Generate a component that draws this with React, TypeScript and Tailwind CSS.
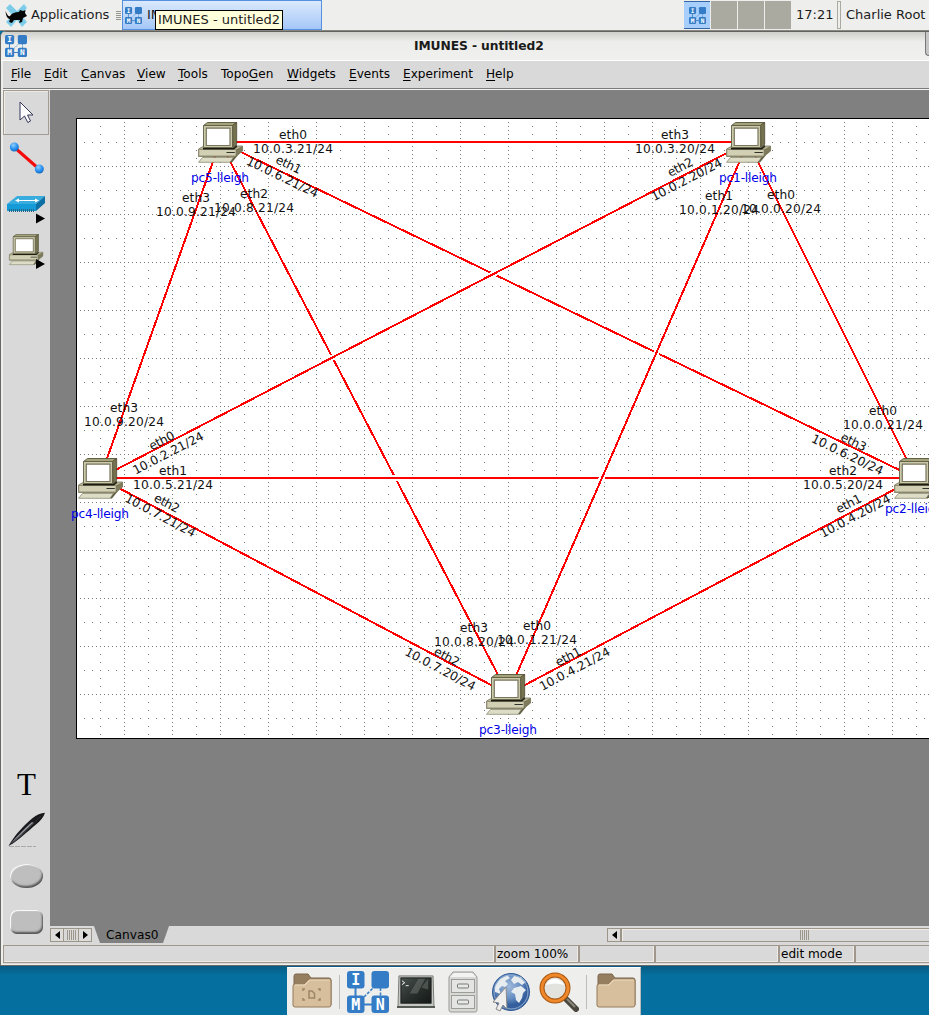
import React from "react";

type Pt = [number, number];

const nodes: Record<string, { at: Pt; label: Pt }> = {
  pc5: { at: [220, 142], label: [220, 178] },
  pc1: { at: [748, 142], label: [748, 178] },
  pc4: { at: [100, 478], label: [100, 514] },
  pc2: { at: [916, 478], label: [914, 509] },
  pc3: { at: [508, 694], label: [508, 730] },
};

// Later entries are painted above earlier ones.
const links: [string, string][] = [
  ["pc4", "pc5"],
  ["pc3", "pc5"],
  ["pc3", "pc4"],
  ["pc2", "pc5"],
  ["pc2", "pc4"],
  ["pc2", "pc3"],
  ["pc1", "pc5"],
  ["pc1", "pc4"],
  ["pc1", "pc3"],
  ["pc1", "pc2"],
];

const ifaces: [number, number, number, string, string][] = [
  [293, 142, 0, "eth0", "10.0.3.21/24"],
  [285.5, 171, 25.8, "eth1", "10.0.6.21/24"],
  [254, 201, 0, "eth2", "10.0.8.21/24"],
  [196, 205, 0, "eth3", "10.0.9.21/24"],
  [781, 202, 0, "eth0", "10.0.0.20/24"],
  [719, 203, 0, "eth1", "10.0.1.20/24"],
  [683.5, 173.5, -27.4, "eth2", "10.0.2.20/24"],
  [675, 142, 0, "eth3", "10.0.3.20/24"],
  [165, 447, -27.4, "eth0", "10.0.2.21/24"],
  [173, 478, 0, "eth1", "10.0.5.21/24"],
  [163.5, 509.5, 27.9, "eth2", "10.0.7.21/24"],
  [124, 415, 0, "eth3", "10.0.9.20/24"],
  [883, 418, 0, "eth0", "10.0.0.21/24"],
  [852, 510, -27.9, "eth1", "10.0.4.20/24"],
  [843, 478, 0, "eth2", "10.0.5.20/24"],
  [850.5, 448.5, 25.8, "eth3", "10.0.6.20/24"],
  [537, 633, 0, "eth0", "10.0.1.21/24"],
  [571.5, 663, -27.9, "eth1", "10.0.4.21/24"],
  [443.5, 663, 27.9, "eth2", "10.0.7.20/24"],
  [474, 635, 0, "eth3", "10.0.8.20/24"],
];

function PcShape() {
  return (
    <g>
      <path d="M0.5 27L6 24H44.5V29L38 34.500H0.500Z" fill="#b9b795" stroke="#77755a" strokeWidth=".8" />
      <path d="M.8 27.500H38V34H.8Z" fill="#d2d0b4" stroke="#85836a" strokeWidth=".8" />
      <path d="M38 27.500L44.700 24V29L38 34.300Z" fill="#7d7b5b" />
      <path d="M5 26H35.500L39 23V25L36 27.500H5Z" fill="#1c1c12" />
      <path d="M5.500 3.500L9.500 .5H38.700L34.500 3.500Z" fill="#a5a37c" stroke="#55533a" strokeWidth=".9" />
      <path d="M34.500 3.500L38.700 .5V22.500L35 26Z" fill="#74724f" stroke="#4c4a31" strokeWidth=".8" />
      <path d="M5.500 3.500H34.500V25.500H5.500Z" fill="#cbc9ab" stroke="#5f5d42" strokeWidth=".9" />
      <path d="M8.300 6.200H32V23.500H8.300Z" fill="#fff" stroke="#78765c" strokeWidth="1.200" />
      <path d="M28.500 30.500H36.800" stroke="#33322a" strokeWidth="1" />
      <path d="M4.500 35.500H35.500L32 40.300H.5Z" fill="#dddcc6" stroke="#8b896f" strokeWidth=".8" />
      <path d="M35.500 35.500L40 33L34 40.500H32Z" fill="#605e43" />
    </g>
  );
}

function Topology() {
  const cols = Array.from({ length: 36 }, (_, i) => 100 + i * 24).filter((x) => x < 929);
  const rows = Array.from({ length: 25 }, (_, i) => 142 + i * 24);
  return (
    <svg className="block h-[836px] w-[879px]" viewBox="50 90 879 836">
      <rect x="76" y="118" width="900" height="621" fill="#000" />
      <rect x="77" y="119" width="900" height="619" fill="#fff" />
      <g stroke="#7a7a7a" shapeRendering="crispEdges">
        {cols.map((x, i) => (
          <line key={x} x1={x + 0.5} x2={x + 0.5} y1="118" y2="738" strokeDasharray={i % 2 ? "1 3" : "1 7"} />
        ))}
        {rows.map((y, i) => (
          <line key={y} x1="76" x2="929" y1={y + 0.5} y2={y + 0.5} strokeDasharray={i % 2 ? "1 3" : "1 7"} />
        ))}
      </g>
      <path d="M76.500 739V118.500H929M76 738.500H929" fill="none" stroke="#000" shapeRendering="crispEdges" />
      {links.map(([a, b]) => {
        const [x1, y1] = nodes[a].at;
        const [x2, y2] = nodes[b].at;
        return (
          <g key={a + b} shapeRendering="crispEdges">
            <line x1={x1} y1={y1} x2={x2} y2={y2} stroke="#fff" strokeWidth="6" />
            <line x1={x1} y1={y1} x2={x2} y2={y2} stroke="#f00" strokeWidth="2" />
          </g>
        );
      })}
      <g fontFamily="'DejaVu Sans', sans-serif" fontSize="12.2" textAnchor="middle" fill="#111">
        {ifaces.map(([x, y, r, name, ip]) => (
          <g key={name + ip} transform={`translate(${x} ${y}) rotate(${r})`}>
            <text y="-3" textLength={r ? 27 : 28}>{name}</text>
            <text y="11" textLength={r ? 78 : 80}>{ip}</text>
          </g>
        ))}
      </g>
      {Object.entries(nodes).map(([id, n]) => (
        <g key={id}>
          <text x={n.label[0]} y={n.label[1] + 4} fontFamily="'DejaVu Sans', sans-serif" fontSize="12.2" textAnchor="middle" textLength="58" fill="#0000e8">
            {id}-lleigh
          </text>
          <g transform={`translate(${n.at[0] - 22} ${n.at[1] - 20})`}>
            <PcShape />
          </g>
        </g>
      ))}
    </svg>
  );
}

function ImunesLogo({ className }: { className: string }) {
  return (
    <svg className={className} viewBox="0 0 42 42">
      <path d="M8.500 16V26M17 33.500H25" stroke="#3a80c4" strokeWidth="2" />
      <path d="M33.500 17V26M17 26L26 17" stroke="#3a80c4" strokeWidth="1.600" strokeDasharray="3 1.500" />
      <g fill="#347dc6">
        <rect x="0" y="0" width="17.500" height="17.500" rx="3" />
        <rect x="24.500" y="0" width="17.500" height="17.500" rx="3" />
        <rect x="0" y="24.500" width="17.500" height="17.500" rx="3" />
        <rect x="24.500" y="24.500" width="17.500" height="17.500" rx="3" />
      </g>
      <g fill="#fff" fontFamily="'DejaVu Sans Mono', monospace" fontWeight="bold" fontSize="15" textAnchor="middle">
        <text x="8.700" y="14.300">I</text>
        <text x="8.700" y="39">M</text>
        <text x="33.300" y="39">N</text>
      </g>
    </svg>
  );
}

function MouseLogo() {
  return (
    <svg className="mr-[2px] h-[23px] w-[24px] shrink-0" viewBox="0 0 24 23">
      <path d="M1 4L5 0L12 7L19 0L22 4L16 11L22 18L17 23L12 16L6 23L1 18L7 11Z" fill="#7ccbe8" stroke="#b7e2f0" strokeWidth=".8" />
      <path d="M.5 7C1 13 3 15 5 15L4 18L7 19L9 16H15L14 19L17 18L18 14L22 12L20 9L20.500 6L18 7L15 6L14 8C10 8 7 9 5 12C3 13 2 10 .5 7Z" fill="#050505" />
    </svg>
  );
}

function Grip() {
  return (
    <div className="flex w-[5px] shrink-0 flex-col gap-px">
      {[0, 1, 2, 3, 4].map((i) => (
        <i key={i} className="h-px w-full bg-[#96968f]" />
      ))}
    </div>
  );
}

function TopPanel() {
  return (
    <div className="flex h-[31px] shrink-0 items-center border-b border-[#888880] bg-[#eeeeec] text-[13px] text-[#1c1c1c]">
      <div className="flex w-[116px] shrink-0 items-center pl-[5px]">
        <MouseLogo />
        <span className="tracking-[-0.1px]">Applications</span>
      </div>
      <Grip />
      <div className="relative ml-px flex h-[30px] w-[200px] shrink-0 items-center border border-[#5490de] bg-gradient-to-b from-[#dbe9fc] to-[#a5c7f8] pl-[2px]">
        <ImunesLogo className="h-[17px] w-[17px]" />
        <span className="ml-[5px]">IM</span>
        <div className="absolute top-[9px] left-[32px] h-[20px] w-[128px] border border-black bg-[#ffffdc] pl-[2px] leading-[18px] whitespace-nowrap">
          IMUNES - untitled2
        </div>
      </div>
      <div className="ml-[362px] flex h-[28px] shrink-0 gap-px">
        <div className="flex w-[26px] items-center justify-center border-y border-[#3465a4] bg-[#a8cefc]">
          <ImunesLogo className="h-[17px] w-[17px]" />
        </div>
        <div className="w-[26px] bg-[#aaaaa1]" />
        <div className="w-[26px] bg-[#aaaaa1]" />
        <div className="w-[26px] bg-[#aaaaa1]" />
      </div>
      <span className="ml-[5px] w-[41px] shrink-0">17:21</span>
      <div className="h-[28px] w-[4px] shrink-0 border border-[#aaaaa1]" />
      <span className="ml-[5px] shrink-0 whitespace-nowrap">Charlie Root</span>
    </div>
  );
}

function TitleBar() {
  return (
    <div className="flex h-[30px] shrink-0 items-center border-t border-b border-t-[#62625f] border-b-white bg-gradient-to-b from-[#cfcfcc] via-[#ededeb] via-35% to-[#f0f0ee] pl-[4px]">
      <ImunesLogo className="h-[22px] w-[22px]" />
      <div className="flex-1 pl-[387px] text-[12.300px] font-bold tracking-[-0.1px] text-[#1a1a1a]">IMUNES - untitled2</div>
      <div className="h-[24px] w-[4px] self-start rounded-bl-[5px] border-b border-l border-[#777] bg-[#c6c6c6]" />
    </div>
  );
}

function MenuBar() {
  return (
    <div className="flex h-[29px] shrink-0 items-center border-b border-b-[#f3f3f3] bg-[#d9d9d9] pb-[2px] pl-[8px] text-[12.100px] text-black shadow-[inset_0_-1px_0_#7a7a7a]">
      <span className="w-[33px]"><u className="underline-offset-2">F</u>ile</span>
      <span className="w-[37px]"><u className="underline-offset-2">E</u>dit</span>
      <span className="w-[56px]"><u className="underline-offset-2">C</u>anvas</span>
      <span className="w-[41px]"><u className="underline-offset-2">V</u>iew</span>
      <span className="w-[43px]"><u className="underline-offset-2">T</u>ools</span>
      <span className="w-[66px]">Topo<u className="underline-offset-2">G</u>en</span>
      <span className="w-[62px]"><u className="underline-offset-2">W</u>idgets</span>
      <span className="w-[54px]"><u className="underline-offset-2">E</u>vents</span>
      <span className="w-[83px]"><u className="underline-offset-2">E</u>xperiment</span>
      <span><u className="underline-offset-2">H</u>elp</span>
    </div>
  );
}

function ToolBar() {
  return (
    <div className="flex w-[47px] shrink-0 flex-col items-center bg-[#d9d9d9]">
      <div className="flex h-[45px] w-[46px] items-center justify-center self-start border border-[#a39c92] shadow-[inset_1px_1px_0_#eeeae4]">
        <svg className="h-[23px] w-[15px]" viewBox="0 0 15 23">
          <path d="M1 1V19L5.500 15L8.800 21.500L11.500 20L8.500 14H14Z" fill="#fff" stroke="#34375a" strokeWidth="1" />
        </svg>
      </div>
      <svg className="mt-[6px] h-[34px] w-[37px]" viewBox="0 0 37 34">
        <defs>
          <radialGradient id="ball" cx=".4" cy=".3" r=".75">
            <stop offset="0" stopColor="#8fd0ff" /><stop offset=".6" stopColor="#258eee" /><stop offset="1" stopColor="#1666b5" />
          </radialGradient>
        </defs>
        <path d="M6 6L31 28" stroke="#f40a0a" strokeWidth="3" />
        <circle cx="6.300" cy="6" r="4.500" fill="url(#ball)" />
        <circle cx="31.300" cy="28" r="4.500" fill="url(#ball)" />
      </svg>
      <svg className="mt-[20px] mr-[2px] h-[29px] w-[40px]" viewBox="0 0 40 29">
        <path d="M1 9L11 1H39L30 9Z" fill="#38acdf" />
        <path d="M30 9L39 1V8L30 16Z" fill="#0d70a5" />
        <path d="M1 9H30V16H1Z" fill="#159bd7" />
        <path d="M3 15.500H29" stroke="#236784" strokeWidth="3" strokeDasharray="1 1" />
        <path d="M11 5.500H30" stroke="#fff" strokeWidth="1" />
        <path d="M9 5.500L13 3.500V7.500ZM33 5.500L29 3.500V7.500Z" fill="#fff" />
        <path d="M30 18.500L39 23.500L30 28.500Z" fill="#000" />
      </svg>
      <svg className="mt-[10px] h-[36px] w-[37px]" viewBox="0 0 37 36">
        <g transform="translate(1 0) scale(.76)"><PcShape /></g>
        <path d="M28 25L37 30L28 35Z" fill="#000" />
      </svg>
      <div className="mt-auto h-[32px] font-['Liberation_Serif',serif] text-[31px] leading-[32px] text-black">T</div>
      <svg className="mt-[11px] h-[36px] w-[38px]" viewBox="0 0 38 36">
        <path d="M1 34.500H28" stroke="#aaa" strokeWidth="1.200" strokeDasharray="5 1" />
        <path d="M.5 34C6 24 16 13 24 6.500Q31 1 37 .8Q35 7 28 12.500C20 19 10 29 .5 34Z" fill="#1a1a1d" />
        <path d="M2 32.500C10 23 15 18 24 10L26 11C18 18 12 26 2 32.500Z" fill="#92939b" />
        <path d="M3 32C13 23 20 16 33 4" fill="none" stroke="#303036" strokeWidth="1" />
      </svg>
      <div className="mt-[16px] h-[24px] w-[33px] shrink-0 rounded-[50%] bg-[#bebebe] shadow-[inset_1px_1px_1px_#fff,inset_-1px_-2px_2px_#555]" />
      <div className="mt-[22px] mb-[11px] h-[24px] w-[33px] shrink-0 rounded-[7px] bg-[#bebebe] shadow-[inset_1px_1px_1px_#fff,inset_-1px_-2px_2px_#555]" />
    </div>
  );
}

function Arrow({ left = false }: { left?: boolean }) {
  return (
    <div className="flex h-[14px] w-[14px] shrink-0 items-center justify-center border border-[#9c958a] bg-[#dedcda]">
      <svg className={left ? "h-[8px] w-[5px]" : "h-[8px] w-[5px] rotate-180"} viewBox="0 0 5 8">
        <path d="M5 0V8L0 4Z" fill="#000" />
      </svg>
    </div>
  );
}

function Ridges() {
  return (
    <div className="flex h-[10px] gap-px">
      {[0, 1, 2, 3, 4].map((i) => (
        <i key={i} className="w-px bg-[#9c958a]" />
      ))}
    </div>
  );
}

function TabRow() {
  return (
    <div className="flex h-[19px] shrink-0 bg-[#d9d9d9]">
      <div className="flex pt-[2px]">
        <Arrow left />
        <div className="flex h-[14px] w-[14px] items-center justify-center border-y border-[#9c958a]"><Ridges /></div>
        <Arrow />
      </div>
      <div className="ml-[2px] h-[17px] w-[75px] bg-[#808080] pl-[12px] text-[12.200px] leading-[18px] text-black [clip-path:polygon(0_0,100%_0,92%_100%,8%_100%)]">
        Canvas0
      </div>
      <div className="ml-[438px] flex flex-1 pt-[2px]">
        <Arrow left />
        <div className="flex h-[14px] flex-1 items-center border border-r-0 border-[#9c958a] pl-[178px] shadow-[inset_1px_1px_0_#efebe4]"><Ridges /></div>
      </div>
    </div>
  );
}

function StatusBar() {
  const cell = "h-[18px] shrink-0 border border-[#a0988c] shadow-[inset_-1px_-1px_0_#efebe4] pl-px leading-[17px] text-[12.100px] text-black";
  return (
    <div className="flex h-[19px] shrink-0 bg-[#d9d9d9]">
      <div className={cell + " w-[492px]"} />
      <div className={cell + " w-[84px]"}>zoom 100%</div>
      <div className={cell + " w-[76px]"} />
      <div className={cell + " w-[124px]"} />
      <div className={cell + " w-[76px]"}>edit mode</div>
      <div className={cell + " w-[80px]"} />
    </div>
  );
}

function Folder({ desktop = false }: { desktop?: boolean }) {
  return (
    <svg className="mb-[4px] h-[40px] w-[40px]" viewBox="0 0 40 40">
      <path d="M2 35V6Q2 4 4 4H16L19 8H37Q39 8 39 10V35Z" fill="#957e60" stroke="#7d684d" />
      <path d="M1 16Q1 14 3 14H12L17 9H37Q39 9 39 11V35Q39 37 37 37H3Q1 37 1 35Z" fill="#d7bf9d" stroke="#947a58" />
      <path d="M3 15H13L18 10H38" fill="none" stroke="#ebdac0" />
      {desktop && (
        <g fill="none" stroke="#9c8666" strokeWidth="1.500">
          <path d="M17 21H20L22.500 23.500V28H17Z" />
          <path d="M11 21V19H13M26 19H28V21M28 28V30H26M13 30H11V28" />
        </g>
      )}
    </svg>
  );
}

function Dock() {
  return (
    <div className="ml-[287px] flex h-[48px] w-[354px] items-center border-t border-r border-white border-r-[#bbb] bg-[#eeeeec]">
      <div className="ml-[5px] flex w-[48px] items-center justify-between"><Folder desktop /><i className="h-[34px] w-px bg-[#bcbcb8]" /></div>
      <ImunesLogo className="ml-[7px] h-[42px] w-[42px]" />
      <svg className="ml-[8px] h-[37px] w-[38px]" viewBox="0 0 39 38">
        <defs><linearGradient id="term" x2="1" y2="1"><stop stopColor="#4b5350" /><stop offset=".5" stopColor="#29302d" /><stop offset="1" stopColor="#151918" /></linearGradient></defs>
        <path d="M2 3H37L38 35H1Z" fill="#c5c7c3" stroke="#777a75" />
        <rect x="4" y="5" width="31" height="26" fill="url(#term)" stroke="#1a1d1b" />
        <path d="M13 21L22 6H29L21 21ZM25 15L32 6V17Z" fill="#707773" opacity=".5" />
        <path d="M5 8L8 10L5 12M9 13H12" fill="none" stroke="#eee" />
        <path d="M0 35H39" stroke="#565a55" strokeWidth="2" />
      </svg>
      <svg className="ml-[12px] h-[42px] w-[32px]" viewBox="0 0 32 42">
        <path d="M2 6L6 1H26L30 6V39Q30 41 28 41H4Q2 41 2 39Z" fill="#d8d8d5" stroke="#999b97" />
        <path d="M3 6L7 2H25L29 6Z" fill="#f3f3f1" />
        <g fill="#e4e4e2" stroke="#9b9d99"><rect x="4.500" y="8.500" width="23" height="13" /><rect x="4.500" y="24.500" width="23" height="13" /></g>
        <g fill="#e8e8e6" stroke="#777a76"><rect x="10.500" y="13" width="11" height="4" rx="1" /><rect x="10.500" y="29" width="11" height="4" rx="1" /></g>
      </svg>
      <svg className="ml-[12px] h-[40px] w-[40px]" viewBox="0 0 40 40">
        <defs><radialGradient id="globe" cx=".45" cy=".35"><stop stopColor="#9fb8da" /><stop offset=".65" stopColor="#678fc3" /><stop offset="1" stopColor="#345f9c" /></radialGradient></defs>
        <circle cx="20" cy="20" r="18.500" fill="url(#globe)" stroke="#315b96" />
        <g fill="#e7ecee">
          <path d="M4 14L9 7L16 3L19 6L14 9L17 12L14 15L11 14L8 17L10 22L4 20Z" />
          <path d="M23 4L30 5L35 10L31 13L27 10L23 12L20 8Z" />
          <path d="M23 16L30 14L35 18L32 21L31 26L28 31L25 28L24 22L20 20Z" />
        </g>
        <circle cx="20" cy="20" r="17" fill="none" stroke="#91aed3" />
        <path d="M15 15L2 30L8 31L5 37L9 39L12 33L16 37Z" fill="#eee" stroke="#888" />
      </svg>
      <svg className="ml-[8px] h-[40px] w-[40px]" viewBox="0 0 40 40">
        <path d="M26 26L37 37" stroke="#49463e" strokeWidth="6" strokeLinecap="round" />
        <path d="M28 27L36 35" stroke="#8b8779" strokeWidth="2" />
        <circle cx="16" cy="16" r="13" fill="#e2e2df" stroke="#a95710" strokeWidth="5" />
        <circle cx="16" cy="16" r="13" fill="none" stroke="#ee882b" strokeWidth="3" />
        <path d="M7 13Q10 6 17 7Q22 8 25 13Q17 10 7 13Z" fill="#fff" />
      </svg>
      <i className="ml-[7px] h-[34px] w-px bg-[#bcbcb8]" />
      <div className="ml-[9px]"><Folder /></div>
    </div>
  );
}

export default function App() {
  return (
    <div className="flex h-[1015px] w-[929px] flex-col overflow-hidden bg-[#05709f] font-['DejaVu_Sans',sans-serif]">
      <TopPanel />
      <div className="flex h-[935px] shrink-0 flex-col overflow-hidden rounded-tl-[6px] border-b border-l border-[#686864] bg-[#eeeeec]">
        <TitleBar />
        <div className="flex flex-1 flex-col border-l-2 border-[#eeeeec]">
          <MenuBar />
          <div className="flex h-[855px]">
            <ToolBar />
            <div className="flex w-[879px] flex-col">
              <div className="h-[836px] overflow-hidden bg-[#808080]"><Topology /></div>
              <TabRow />
            </div>
          </div>
          <StatusBar />
        </div>
      </div>
      <div className="h-[49px] shrink-0 bg-gradient-to-b from-[#075c84] via-[#05709f] via-20% to-[#056f9f] pt-px"><Dock /></div>
    </div>
  );
}
